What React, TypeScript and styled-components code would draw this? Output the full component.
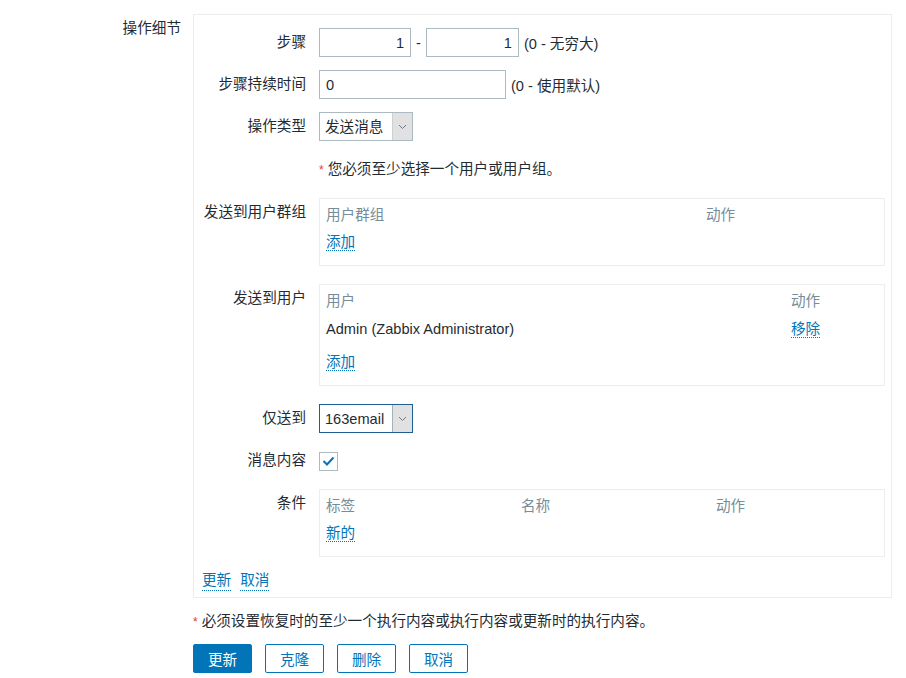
import React from "react";
import styled, { createGlobalStyle } from "styled-components";

const FONT = `"Liberation Sans", Arial, "Noto Sans CJK SC", sans-serif`;

const GlobalStyle = createGlobalStyle`
  html, body { margin: 0; padding: 0; background: #ffffff; }
  body { font-family: ${FONT}; font-size: 14.6px; color: #1f2c33; }
  * { box-sizing: border-box; }
`;

const Page = styled.div`
  display: grid;
  grid-template-columns: 181px 699px;
  column-gap: 12px;
  padding-top: 14px;
`;

const SectionLabel = styled.div`
  text-align: right;
  line-height: 29px;
  white-space: nowrap;
`;

const Panel = styled.div`
  border: 1px solid #ebeef0;
  padding: 13px 6px 6px 8px;
`;

const FormList = styled.div`
  display: flex;
  flex-direction: column;
  gap: 13px;
`;

const FormRow = styled.div`
  display: grid;
  grid-template-columns: 104px 1fr;
  column-gap: 13px;
  align-items: start;
`;

const Label = styled.div`
  text-align: right;
  line-height: 29px;
  white-space: nowrap;
`;

const Field = styled.div<{ $h?: number }>`
  display: flex;
  align-items: center;
  gap: 5px;
  min-height: ${(p) => p.$h ?? 29}px;
`;

const TextInput = styled.div<{ $w: number; $right?: boolean }>`
  width: ${(p) => p.$w}px;
  height: 29px;
  border: 1px solid #acbbc2;
  padding: 0 6px;
  line-height: 28px;
  text-align: ${(p) => (p.$right ? "right" : "left")};
  background: #fff;
`;

const Hint = styled.span`
  white-space: nowrap;
`;

const SelectBox = styled.div<{ $focused?: boolean }>`
  width: 94px;
  height: 29px;
  display: flex;
  border: 1px solid ${(p) => (p.$focused ? "#1f5f93" : "#acbbc2")};
  background: #fff;
`;

const SelectText = styled.span`
  flex: 1;
  padding-left: 5px;
  line-height: 28px;
  white-space: nowrap;
`;

const SelectArrow = styled.span<{ $focused?: boolean }>`
  width: 20px;
  display: flex;
  align-items: center;
  justify-content: center;
  background: #e1e1e1;
  border-left: 1px solid ${(p) => (p.$focused ? "#9fb2bd" : "#c9d1d5")};
`;

const CheckBox = styled.span`
  width: 19px;
  height: 19px;
  border: 1px solid #acbbc2;
  display: flex;
  align-items: center;
  justify-content: center;
  background: #fff;
`;

const Note = styled.div`
  line-height: 30px;
  white-space: nowrap;
`;

const Star = styled.span`
  color: #e33734;
  margin-right: 4px;
  font-size: 12px;
`;

const Table = styled.div<{ $spaced?: boolean }>`
  border: 1px solid #ebeef0;
  padding: 3px 6px 9px;
  margin-bottom: ${(p) => (p.$spaced ? 5 : 0)}px;
`;

const HeadRow = styled.div<{ $cols: string }>`
  display: grid;
  grid-template-columns: ${(p) => p.$cols};
  line-height: 26px;
  color: #768d99;
  white-space: nowrap;
`;

const BodyRow = styled.div<{ $cols: string }>`
  display: grid;
  grid-template-columns: ${(p) => p.$cols};
  line-height: 28px;
  padding: 1px 0 5px;
  white-space: nowrap;
`;

const FootRow = styled.div`
  line-height: 28px;
`;

const Link = styled.a`
  color: #0275b8;
  text-decoration: none;
  border-bottom: 1px dotted #0275b8;
  cursor: pointer;
  line-height: 1.2;
`;

const LinkRow = styled.div`
  display: flex;
  gap: 9px;
  line-height: 20px;
  padding-top: 2px;
`;

const FooterNote = styled.div`
  margin-top: 13px;
  line-height: 20px;
  white-space: nowrap;
`;

const ButtonBar = styled.div`
  margin-top: 12px;
  display: flex;
  gap: 13px;
`;

const Button = styled.button<{ $primary?: boolean }>`
  width: 59px;
  height: 29px;
  font-family: ${FONT};
  font-size: 14.6px;
  border-radius: 2px;
  border: 1px solid #0275b8;
  background: ${(p) => (p.$primary ? "#0275b8" : "#ffffff")};
  color: ${(p) => (p.$primary ? "#ffffff" : "#0275b8")};
  padding: 0;
  cursor: pointer;
`;

const Chevron = () => (
  <svg width="9" height="6" viewBox="0 0 9 6">
    <path d="M1 1l3.5 3.5L8 1" fill="none" stroke="#6b7c85" strokeWidth="1" />
  </svg>
);

const Check = () => (
  <svg width="13" height="10" viewBox="0 0 13 10">
    <path d="M1.5 5l3.5 3.5L11.5 1.5" fill="none" stroke="#0275b8" strokeWidth="2" />
  </svg>
);

const Select = ({ value, focused }: { value: string; focused?: boolean }) => (
  <SelectBox $focused={focused}>
    <SelectText>{value}</SelectText>
    <SelectArrow $focused={focused}>
      <Chevron />
    </SelectArrow>
  </SelectBox>
);

export default function App() {
  return (
    <>
      <GlobalStyle />
      <Page>
        <SectionLabel>操作细节</SectionLabel>
        <div>
          <Panel>
            <FormList>
              <FormRow>
                <Label>步骤</Label>
                <Field>
                  <TextInput $w={92} $right>1</TextInput>
                  <Hint>-</Hint>
                  <TextInput $w={93} $right>1</TextInput>
                  <Hint>(0 - 无穷大)</Hint>
                </Field>
              </FormRow>
              <FormRow>
                <Label>步骤持续时间</Label>
                <Field>
                  <TextInput $w={187}>0</TextInput>
                  <Hint>(0 - 使用默认)</Hint>
                </Field>
              </FormRow>
              <FormRow>
                <Label>操作类型</Label>
                <Field>
                  <Select value="发送消息" />
                </Field>
              </FormRow>
              <FormRow>
                <Label />
                <Note>
                  <Star>*</Star>您必须至少选择一个用户或用户组。
                </Note>
              </FormRow>
              <FormRow>
                <Label>发送到用户群组</Label>
                <Table $spaced>
                  <HeadRow $cols="380px 1fr">
                    <span>用户群组</span>
                    <span>动作</span>
                  </HeadRow>
                  <FootRow>
                    <Link>添加</Link>
                  </FootRow>
                </Table>
              </FormRow>
              <FormRow>
                <Label>发送到用户</Label>
                <Table $spaced>
                  <HeadRow $cols="465px 1fr">
                    <span>用户</span>
                    <span>动作</span>
                  </HeadRow>
                  <BodyRow $cols="465px 1fr">
                    <span>Admin (Zabbix Administrator)</span>
                    <span>
                      <Link>移除</Link>
                    </span>
                  </BodyRow>
                  <FootRow>
                    <Link>添加</Link>
                  </FootRow>
                </Table>
              </FormRow>
              <FormRow>
                <Label>仅送到</Label>
                <Field>
                  <Select value="163email" focused />
                </Field>
              </FormRow>
              <FormRow>
                <Label>消息内容</Label>
                <Field $h={30}>
                  <CheckBox>
                    <Check />
                  </CheckBox>
                </Field>
              </FormRow>
              <FormRow>
                <Label>条件</Label>
                <Table>
                  <HeadRow $cols="195px 195px 1fr">
                    <span>标签</span>
                    <span>名称</span>
                    <span>动作</span>
                  </HeadRow>
                  <FootRow>
                    <Link>新的</Link>
                  </FootRow>
                </Table>
              </FormRow>
              <LinkRow>
                <Link>更新</Link>
                <Link>取消</Link>
              </LinkRow>
            </FormList>
          </Panel>
          <FooterNote>
            <Star>*</Star>必须设置恢复时的至少一个执行内容或执行内容或更新时的执行内容。
          </FooterNote>
          <ButtonBar>
            <Button $primary>更新</Button>
            <Button>克隆</Button>
            <Button>删除</Button>
            <Button>取消</Button>
          </ButtonBar>
        </div>
      </Page>
    </>
  );
}
